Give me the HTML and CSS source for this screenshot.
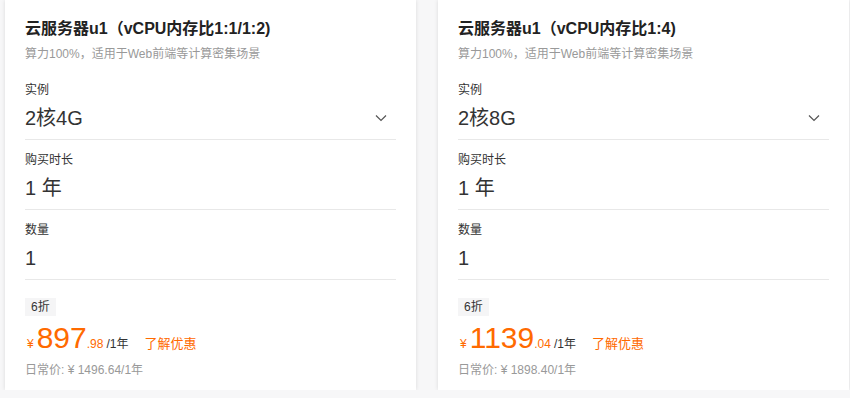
FILE: index.html
```html
<!DOCTYPE html>
<html lang="zh-CN">
<head>
    <meta charset="UTF-8">
    <meta name="viewport" content="width=device-width, initial-scale=1.0">
    <title>云服务器u1</title>
    <link rel="stylesheet" href="styles.css">
</head>
<body>
    <!--two product cards side by side-->
    <div class="cards">
        <div class="card">
            <div class="card-head">
                <h2 class="card-title">云服务器u1（vCPU内存比1:1/1:2)</h2>
                <p class="card-desc">算力100%，适用于Web前端等计算密集场景</p>
            </div>
            <div class="field">
                <div class="field-label">实例</div>
                <div class="field-value select">
                    <span>2核4G</span>
                    <svg class="chevron" width="12" height="8" viewBox="0 0 12 8"><path d="M1 1.5 L6 6.5 L11 1.5" fill="none" stroke="#555" stroke-width="1.2"/></svg>
                </div>
            </div>
            <div class="field">
                <div class="field-label">购买时长</div>
                <div class="field-value">1 年</div>
            </div>
            <div class="field">
                <div class="field-label">数量</div>
                <div class="field-value">1</div>
            </div>
            <div class="price-box">
                <span class="badge">6折</span>
                <div class="price-line">
                    <span class="yen">¥</span><span class="price-int">897</span><span class="price-dec">.98</span>
                    <span class="unit">/1年</span>
                    <a class="promo" href="#">了解优惠</a>
                </div>
                <div class="origin">日常价: ¥ 1496.64/1年</div>
            </div>
        </div>

        <div class="card">
            <div class="card-head">
                <h2 class="card-title">云服务器u1（vCPU内存比1:4)</h2>
                <p class="card-desc">算力100%，适用于Web前端等计算密集场景</p>
            </div>
            <div class="field">
                <div class="field-label">实例</div>
                <div class="field-value select">
                    <span>2核8G</span>
                    <svg class="chevron" width="12" height="8" viewBox="0 0 12 8"><path d="M1 1.5 L6 6.5 L11 1.5" fill="none" stroke="#555" stroke-width="1.2"/></svg>
                </div>
            </div>
            <div class="field">
                <div class="field-label">购买时长</div>
                <div class="field-value">1 年</div>
            </div>
            <div class="field">
                <div class="field-label">数量</div>
                <div class="field-value">1</div>
            </div>
            <div class="price-box">
                <span class="badge">6折</span>
                <div class="price-line">
                    <span class="yen">¥</span><span class="price-int">1139</span><span class="price-dec">.04</span>
                    <span class="unit">/1年</span>
                    <a class="promo" href="#">了解优惠</a>
                </div>
                <div class="origin">日常价: ¥ 1898.40/1年</div>
            </div>
        </div>
    </div>
</body>
</html>
```

FILE: styles.css
```css
/* page background and base font */
body {
    margin: 0;
    background-color: #f7f7f8;
    font-family: "Liberation Sans", "Noto Sans CJK SC", sans-serif;
    color: #333;
}

/* row holding the cards */
.cards {
    display: flex;
    gap: 22px;
    padding-left: 5px;
}

/* white product card */
.card {
    width: 411px;
    height: 390px;
    box-sizing: border-box;
    padding: 17px 20px 0 20px;
    background-color: white;
    box-shadow: 0 0 4px rgba(0, 0, 0, 0.12);
}

.card-title {
    margin: 0;
    font-size: 16px;
    line-height: 24px;
    font-weight: bold;
    color: #222;
}

.card-desc {
    margin: 4px 0 7px 0;
    font-size: 12px;
    line-height: 18px;
    color: #999;
}

/* each option row with line under it */
.field {
    padding: 10px 0 7px 0;
    border-bottom: 1px solid #e8e8e8;
}

.field-label {
    font-size: 12px;
    line-height: 20px;
    color: #333;
}

.field-value {
    margin-top: 4px;
    font-size: 20px;
    line-height: 28px;
    color: #333;
}

.select {
    display: flex;
    justify-content: space-between;
    align-items: center;
    padding-right: 9px;
}

/* price area */
.price-box {
    padding-top: 17px;
}

.badge {
    display: inline-block;
    padding: 0 6px;
    font-size: 12px;
    line-height: 18px;
    background-color: #f5f5f6;
    color: #333;
}

.price-line {
    display: flex;
    align-items: baseline;
    margin-top: 5px;
    line-height: 34px;
    color: #ff6a00;
}

.yen {
    font-size: 12px;
    margin: 0 3px 0 2px;
}

.price-int {
    font-size: 30px;
}

.price-dec {
    font-size: 12px;
}

.unit {
    font-size: 12px;
    color: #333;
    margin-left: 3px;
}

.promo {
    font-size: 13px;
    color: #ff6a00;
    text-decoration: none;
    margin-left: 16px;
}

.origin {
    font-size: 12px;
    line-height: 18px;
    color: #999;
}
```
